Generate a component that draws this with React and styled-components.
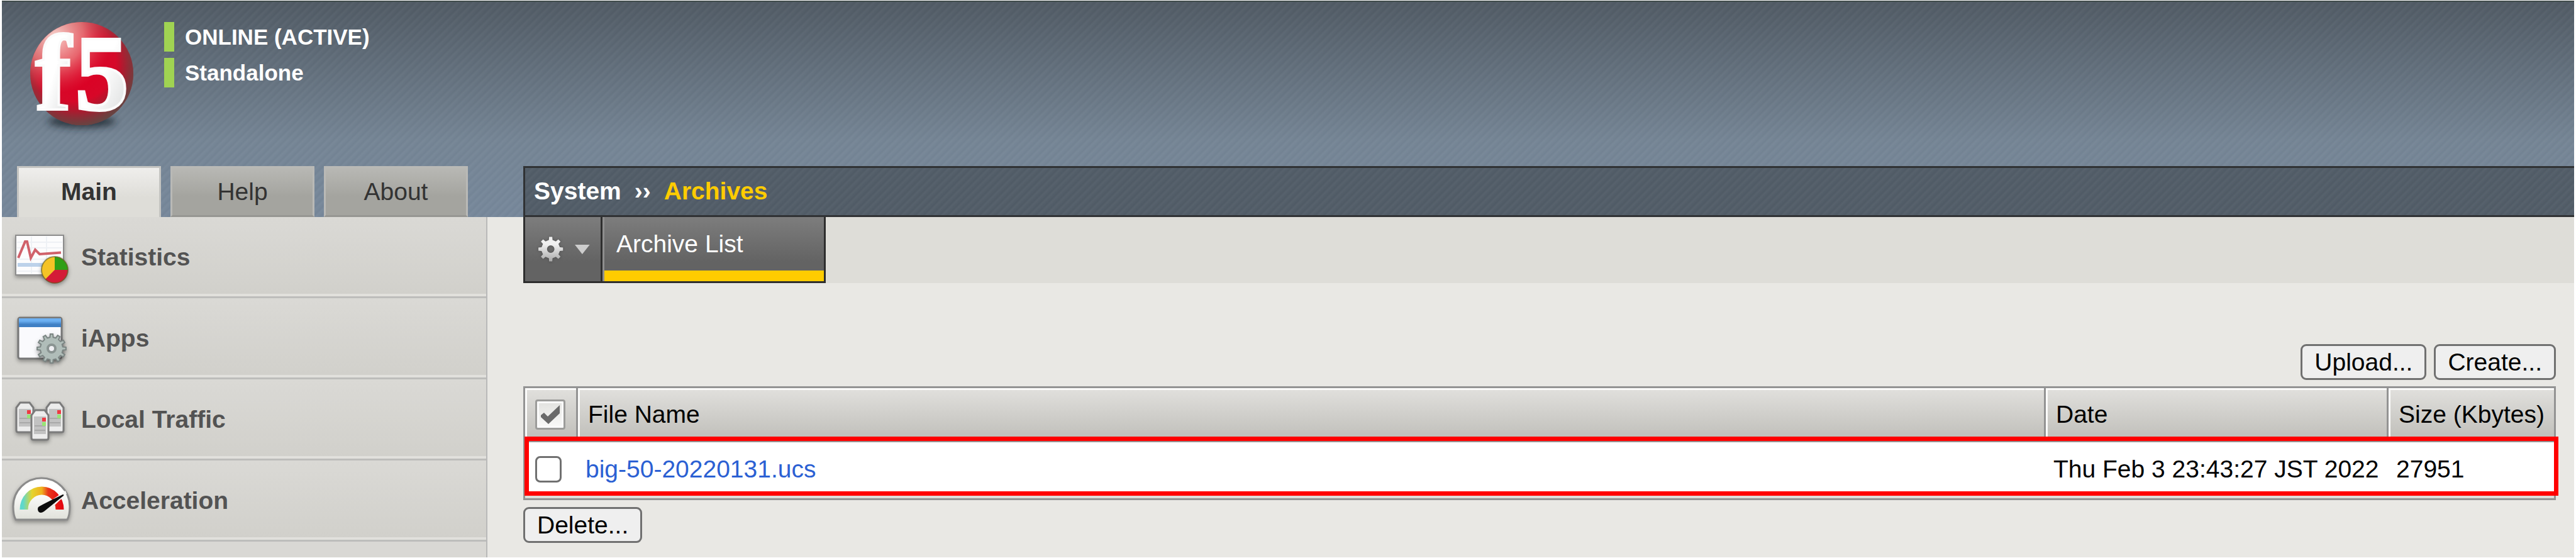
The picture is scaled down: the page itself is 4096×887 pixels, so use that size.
import React from "react";
import styled, { createGlobalStyle } from "styled-components";

const GlobalStyle = createGlobalStyle`
  *, *::before, *::after { box-sizing: border-box; }
  body {
    margin: 0;
    background: #fff;
    color: #000;
    font-family: "Liberation Sans", Arial, Helvetica, sans-serif;
    font-size: 39px;
    line-height: 45px;
  }
  a { color: inherit; text-decoration: none; }
  button, input { font: inherit; margin: 0; }
`;

const stripes = "repeating-linear-gradient(135deg, rgba(255,255,255,0.035) 0px, rgba(255,255,255,0.01) 3px, rgba(0,0,0,0.015) 6px, rgba(255,255,255,0.035) 9px)";

const Page = styled.div`
  display: flex;
  flex-direction: column;
  min-height: 100vh;
  padding: 1px 3px;
`;

const Header = styled.header`
  display: flex;
  flex-direction: column;
  gap: 49px;
  padding-top: 22px;
  border-top: 2px solid #3f4b4a;
  background: ${stripes}, linear-gradient(#505a64 0, #748494 220px, #76879a 344px);
`;

const Brand = styled.div`
  display: flex;
  gap: 40px;
  padding-left: 38px;
  height: 190px;
`;

const StatusList = styled.div`
  display: flex;
  flex-direction: column;
  gap: 10px;
  padding-top: 10px;
`;

const Status = styled.div`
  border-left: 16px solid #a0d352;
  padding-left: 17px;
  color: #fff;
  font-size: 35px;
  font-weight: bold;
  line-height: 47px;
`;

const NavRow = styled.div`
  display: grid;
  grid-template-columns: 829px 1fr;
`;

const Tabs = styled.nav`
  display: flex;
  gap: 15px;
  padding-left: 24px;
`;

const Tab = styled.a`
  width: 229px;
  height: 81px;
  text-align: center;
  color: #333;
  border: 3px solid ${(p) => (p.$active ? "#c4c4c1" : "#b9b9b6")};
  border-bottom: ${(p) => (p.$active ? "0" : "3px solid #969692")};
  font-weight: ${(p) => (p.$active ? "bold" : "normal")};
  background: ${(p) => (p.$active ? "linear-gradient(#efeeec, #deddd8 60%)" : "linear-gradient(#b8b8b4, #a4a49f 60%)")};
  line-height: 75px;
`;

const Breadcrumb = styled.div`
  display: flex;
  align-items: center;
  gap: 21px;
  padding: 0 0 2px 14px;
  border: 3px solid #303234;
  border-right: 0;
  color: #fff;
  font-weight: bold;
  background: ${stripes}, #515c67;
`;

const Current = styled.span`
  color: #ffcc00;
`;

const Body = styled.div`
  display: grid;
  grid-template-columns: 772px 1fr;
  flex: 1;
  background: #e9e8e4;
`;

const Sidebar = styled.nav`
  display: flex;
  flex-direction: column;
  border-right: 2px solid #b9b9b9;
  background: #d9d8d4;
`;

const SideItem = styled.a`
  display: flex;
  align-items: center;
  gap: 17px;
  height: 129px;
  padding-left: 13px;
  color: #535353;
  font-weight: bold;
  border-bottom: 3px solid #bdbdbb;
  box-shadow: inset 0 -4px #e1e0dc;
  background: linear-gradient(#dad9d5, #d1d0cb);
`;

const Main = styled.main`
  padding-left: 57px;
`;

const Strip = styled.div`
  display: flex;
  height: 105px;
  background: #deddd8;
`;

const stripCell = `
  border: 0 solid #2e2e2e;
  border-bottom-width: 3px;
  background: linear-gradient(#7d7d7d, #636363 70%);
`;

const GearButton = styled.button`
  ${stripCell}
  display: flex;
  align-items: center;
  gap: 15px;
  width: 126px;
  padding: 0 17px;
  border-left-width: 3px;
  border-right-width: 3px;
`;

const StripTab = styled.a`
  ${stripCell}
  width: 355px;
  padding-left: 22px;
  border-right-width: 3px;
  line-height: 85px;
  color: #fff;
  box-shadow: inset 3px 0 #8e8e8e, inset 0 -17px #ffcc00;
`;

const Content = styled.div`
  padding: 97px 29px 22px 0;
`;

const Actions = styled.div`
  display: flex;
  justify-content: flex-end;
  gap: 12px;
  margin-bottom: 10px;
`;

const Button = styled.button`
  height: 57px;
  padding: 0 19px;
  border: 3px solid #707070;
  border-radius: 9px;
  background: #efefef;
  color: #000;
  line-height: 51px;
`;

const TableFrame = styled.div`
  position: relative;
  margin-bottom: 11px;
`;

const Highlight = styled.div`
  position: absolute;
  top: 80px;
  left: 2px;
  right: -4px;
  height: 94px;
  border: 7px solid #ff0000;
  pointer-events: none;
`;

const Table = styled.table`
  width: 100%;
  table-layout: fixed;
  border-collapse: separate;
  border-spacing: 0;
  border: 3px solid #939393;
`;

const Th = styled.th`
  width: ${(p) => p.$width || "auto"};
  height: 86px;
  padding: 0 0 0 16px;
  border-right: 3px solid #939393;
  border-bottom: 3px solid #939393;
  box-shadow: inset 3px 3px #fbfbfa;
  background: linear-gradient(#e1e0dd, #bfbeb9);
  font-weight: normal;
  text-align: left;
  white-space: nowrap;
  &:last-child { border-right: 0; }
`;

const Td = styled.td`
  height: 89px;
  padding: 0 0 0 ${(p) => (p.$check ? "16px" : "12px")};
  border-bottom: 4px solid #deddd9;
  background: #fff;
  white-space: nowrap;
`;

const FileLink = styled.a`
  color: #2b60d3;
`;

const CheckAll = styled.label`
  display: grid;
  width: 48px;
  height: 48px;
  > * { grid-area: 1 / 1; }
`;

const AllBox = styled.input`
  appearance: none;
  width: 48px;
  height: 48px;
  border: 3px solid #9c9c9a;
  border-radius: 4px;
  box-shadow: inset 0 0 0 3px #fafafa;
  background: linear-gradient(#e2e2df, #fafaf9);
`;

const RowBox = styled.input`
  appearance: none;
  display: block;
  width: 42px;
  height: 42px;
  border: 3px solid #707070;
  border-radius: 8px;
  background: #fff;
`;

function gearPath(cx, cy, outer, inner, teeth, share) {
  const step = (Math.PI * 2) / teeth;
  const points = [];
  for (let i = 0; i < teeth; i += 1) {
    const a = i * step - Math.PI / 2;
    [[inner, -share * 1.25], [outer, -share * 0.8], [outer, share * 0.8], [inner, share * 1.25]].forEach(([r, k]) => {
      points.push(`${(cx + r * Math.cos(a + k * step)).toFixed(2)} ${(cy + r * Math.sin(a + k * step)).toFixed(2)}`);
    });
  }
  return `M${points.join("L")}Z`;
}

const LogoSvg = styled.svg`
  flex: none;
  overflow: visible;
`;

const Logo = () => (
  <LogoSvg width="180" height="190" viewBox="0 0 180 190" role="img" aria-label="f5">
    <defs>
      <radialGradient id="ball" cx="0.5" cy="0.5" r="0.5">
        <stop offset="0" stopColor="#dc0024" />
        <stop offset="0.75" stopColor="#d50a2a" />
        <stop offset="1" stopColor="#b52436" />
      </radialGradient>
      <radialGradient id="shine" cx="0.24" cy="0.14" r="0.55">
        <stop offset="0" stopColor="#fbdcd6" stopOpacity="0.95" />
        <stop offset="0.5" stopColor="#f09a94" stopOpacity="0.65" />
        <stop offset="1" stopColor="#e04050" stopOpacity="0" />
      </radialGradient>
      <radialGradient id="shade" cx="0.42" cy="0.36" r="0.66">
        <stop offset="0.62" stopColor="#603030" stopOpacity="0" />
        <stop offset="1" stopColor="#5a4a44" stopOpacity="0.9" />
      </radialGradient>
      <linearGradient id="letter" x1="0" y1="0" x2="1" y2="1">
        <stop offset="0.5" stopColor="#fff" />
        <stop offset="1" stopColor="#d4d6d6" />
      </linearGradient>
      <filter id="soft" x="-30%" y="-100%" width="160%" height="300%"><feGaussianBlur stdDeviation="6" /></filter>
    </defs>
    <ellipse cx="89" cy="168" rx="54" ry="10" fill="#1d262e" opacity="0.8" filter="url(#soft)" />
    <circle cx="89" cy="92" r="82" fill="url(#ball)" />
    <circle cx="89" cy="92" r="82" fill="url(#shine)" />
    <circle cx="89" cy="92" r="82" fill="url(#shade)" />
    <g fontFamily="Liberation Serif, Times New Roman, serif" fontWeight="bold" fontSize="172" fill="url(#letter)" stroke="#fbfbfb" strokeWidth="4">
      <text x="15" y="149">f</text>
      <text x="78" y="149">5</text>
    </g>
  </LogoSvg>
);

const shadow = { filter: "drop-shadow(0 3px 3px rgba(0,0,0,0.35))" };

const IconSvg = styled.svg.attrs({ width: 96, height: 96, viewBox: "0 0 96 96", "aria-hidden": true })`
  flex: none;
  overflow: visible;
`;

const StatisticsIcon = () => (
  <IconSvg>
    <g style={shadow}>
      <rect x="9" y="14" width="76" height="63" fill="#fcfcfd" stroke="#8d8d8d" strokeWidth="2" />
      <path d="M11 25H83M11 34H83M11 52H83M11 71H83M34 16V75M58 16V75" stroke="#eef1f5" strokeWidth="2" />
      <rect x="12" y="58" width="70" height="6" fill="#bcd2ea" />
      <path d="M13 50L24 24H27L33 50L40 37L47 44L81 41.500" fill="none" stroke="#d0616a" strokeWidth="4" />
    </g>
    <g style={shadow}>
      <circle cx="71" cy="69" r="21" fill="#f5c326" />
      <path d="M71 69V48A21 21 0 0 1 92 69Z" fill="#2f9f16" />
      <path d="M71 69H92A21 21 0 0 1 56 84Z" fill="#d41b37" />
      <circle cx="71" cy="69" r="21" fill="none" stroke="#5e5a20" strokeOpacity="0.6" strokeWidth="2" />
    </g>
  </IconSvg>
);

const AppsIcon = () => (
  <IconSvg>
    <defs>
      <linearGradient id="bar" x1="0" y1="0" x2="0" y2="1">
        <stop offset="0.3" stopColor="#6cb0f2" />
        <stop offset="0.7" stopColor="#3f7fc4" />
      </linearGradient>
    </defs>
    <g style={shadow}>
      <rect x="13" y="16" width="69" height="65" rx="3" fill="#fafafd" stroke="#777" strokeWidth="3" />
      <rect x="14" y="17" width="67" height="14" fill="url(#bar)" />
    </g>
    <g style={shadow}>
      <path d={gearPath(66, 65, 23, 18, 12, 0.22)} fill="#b0bdb9" stroke="#7b8583" strokeWidth="2" />
      <circle cx="66" cy="65" r="6" fill="#f0f0f4" stroke="#8a9492" strokeWidth="4" />
    </g>
  </IconSvg>
);

const Server = ({ x, y }) => (
  <g transform={`translate(${x} ${y})`}>
    <path d="M1 9L7 1H22L28 9V45Q28 48 25 48H4Q1 48 1 45Z" fill="#ececec" stroke="#7b7b7b" strokeWidth="3" />
    <path d="M5 11H24V39H5Z" fill="#c2c2c2" />
    <path d="M6 26H23M6 33H23" stroke="#a9a9a9" strokeWidth="2" />
    <rect x="18" y="13" width="6" height="6" fill="#ee3a42" />
    <rect x="18" y="20" width="6" height="6" fill="#98e476" />
  </g>
);

const TrafficIcon = () => (
  <IconSvg>
    <g style={shadow}>
      <Server x={9} y={21} />
      <Server x={57} y={21} />
      <Server x={33} y={33} />
    </g>
  </IconSvg>
);

const GaugeIcon = () => (
  <IconSvg>
    <defs>
      <linearGradient id="dial" x1="0" y1="0" x2="0" y2="1">
        <stop offset="0.3" stopColor="#fff" />
        <stop offset="1" stopColor="#e0e1da" />
      </linearGradient>
      <linearGradient id="heat" x1="15" y1="0" x2="86" y2="0" gradientUnits="userSpaceOnUse">
        <stop offset="0.08" stopColor="#5fd8cc" />
        <stop offset="0.28" stopColor="#e5d42e" />
        <stop offset="0.5" stopColor="#efb01e" />
        <stop offset="0.64" stopColor="#e8371b" />
        <stop offset="1" stopColor="#e3000f" />
      </linearGradient>
    </defs>
    <path style={shadow} d="M9 79Q5 72 5 58A45 45 0 0 1 95 58Q95 72 91 79Z" fill="url(#dial)" stroke="#8b8b8b" strokeWidth="3" />
    <path d="M22 63A28.500 30 0 0 1 79 63" fill="none" stroke="url(#heat)" strokeWidth="13" />
    <path d="M69 46L88 33L90 38L71 56Z" fill="#f6f6f4" />
    <path d="M45 59Q47 57 84 39Q86 39 85 41L54 66Q48 70 45 66Q43 62 45 59Z" fill="#0c0c0c" />
  </IconSvg>
);

const sections = [
  ["Statistics", StatisticsIcon],
  ["iApps", AppsIcon],
  ["Local Traffic", TrafficIcon],
  ["Acceleration", GaugeIcon],
];

export default function App() {
  return (
    <>
      <GlobalStyle />
      <Page>
        <Header>
          <Brand>
            <Logo />
            <StatusList>
              <Status>ONLINE (ACTIVE)</Status>
              <Status>Standalone</Status>
            </StatusList>
          </Brand>
          <NavRow>
            <Tabs>
              <Tab href="#main" $active>Main</Tab>
              <Tab href="#help">Help</Tab>
              <Tab href="#about">About</Tab>
            </Tabs>
            <Breadcrumb>
              <span>System</span>
              <span>››</span>
              <Current>Archives</Current>
            </Breadcrumb>
          </NavRow>
        </Header>
        <Body>
          <Sidebar>
            {sections.map(([name, Icon]) => (
              <SideItem href="#section" key={name}>
                <Icon />
                {name}
              </SideItem>
            ))}
          </Sidebar>
          <Main>
            <Strip>
              <GearButton aria-label="Options">
                <svg width="48" height="48" viewBox="0 0 48 48" aria-hidden="true">
                  <defs>
                    <linearGradient id="metal" x1="0" y1="0" x2="0" y2="1">
                      <stop offset="0.3" stopColor="#f0f0f0" />
                      <stop offset="1" stopColor="#a8a8a8" />
                    </linearGradient>
                  </defs>
                  <g style={{ filter: "drop-shadow(0 0 2px rgba(0,0,0,0.25))" }}>
                    <path fillRule="evenodd" fill="url(#metal)" d={`${gearPath(24, 24, 20, 15, 8, 0.2)}M24 18A6 6 0 1 0 24 30A6 6 0 1 0 24 18Z`} />
                  </g>
                </svg>
                <svg width="24" height="15" viewBox="0 0 24 15" aria-hidden="true"><path d="M0 0H24L12 15Z" fill="#cdcdcd" /></svg>
              </GearButton>
              <StripTab href="#archives">Archive List</StripTab>
            </Strip>
            <Content>
              <Actions>
                <Button>Upload...</Button>
                <Button>Create...</Button>
              </Actions>
              <TableFrame>
                <Table>
                  <thead>
                    <tr>
                      <Th $width="84px">
                        <CheckAll>
                          <AllBox type="checkbox" defaultChecked aria-label="Select all" />
                          <svg width="48" height="48" viewBox="0 0 48 48" aria-hidden="true">
                            <path d="M9 25L14 21L20 27L39 9V22L21 39L9 28Z" fill="#6a6a6a" />
                          </svg>
                        </CheckAll>
                      </Th>
                      <Th>File Name</Th>
                      <Th $width="545px">Date</Th>
                      <Th $width="263px">Size (Kbytes)</Th>
                    </tr>
                  </thead>
                  <tbody>
                    <tr>
                      <Td $check><RowBox type="checkbox" aria-label="Select big-50-20220131.ucs" /></Td>
                      <Td><FileLink href="#file">big-50-20220131.ucs</FileLink></Td>
                      <Td>Thu Feb 3 23:43:27 JST 2022</Td>
                      <Td>27951</Td>
                    </tr>
                  </tbody>
                </Table>
                <Highlight />
              </TableFrame>
              <Button>Delete...</Button>
            </Content>
          </Main>
        </Body>
      </Page>
    </>
  );
}
